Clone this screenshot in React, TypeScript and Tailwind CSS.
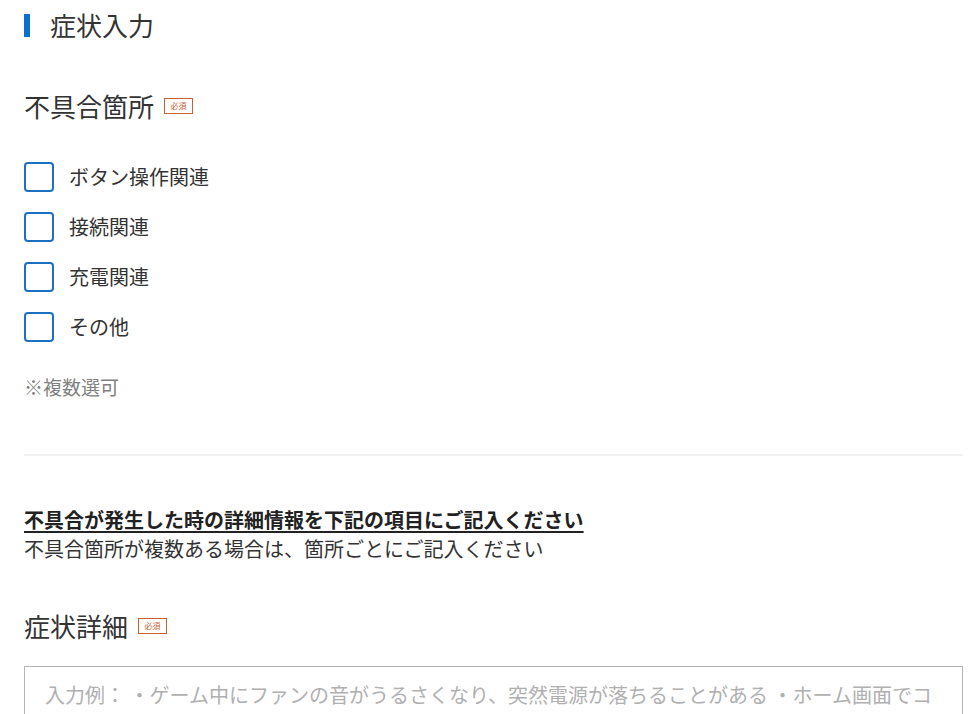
import React from "react";

const font = { fontFamily: '"Noto Sans CJK JP", "Noto Sans", sans-serif' };

function Badge() {
  return (
    <span className="ml-[10px] inline-flex h-[16px] w-[29px] items-center justify-center border border-[#c9602f] bg-white text-[8px] leading-none text-[#c9602f]">
      必須
    </span>
  );
}

function CheckRow({ label }: { label: string }) {
  return (
    <label className="flex h-[30px] items-center">
      <span className="h-[30px] w-[30px] shrink-0 rounded-[4px] border-2 border-[#1b6fc4] bg-white" />
      <span className="ml-[15px] text-[20px] leading-[30px] text-[#333]">{label}</span>
    </label>
  );
}

export default function App() {
  return (
    <div className="min-h-[714px] bg-white pl-[24px] pr-[5px] text-[#333]" style={font}>
      <div className="flex h-[36px] items-center pt-0 mt-[7px]">
        <span className="h-[23px] w-[6px] bg-[#0b6fd0]" />
        <h2 className="ml-[20px] text-[26px] font-normal leading-[36px] text-[#333]">症状入力</h2>
      </div>

      <div className="mt-[45px] flex h-[36px] items-center">
        <h3 className="text-[26px] font-normal leading-[36px] text-[#333]">不具合箇所</h3>
        <Badge />
      </div>

      <div className="mt-[38px] flex flex-col gap-[20px]">
        <CheckRow label="ボタン操作関連" />
        <CheckRow label="接続関連" />
        <CheckRow label="充電関連" />
        <CheckRow label="その他" />
      </div>

      <p className="mt-[30px] text-[19px] leading-[30px] text-[#808080]">※複数選可</p>

      <div className="mt-[52px] h-[2px] bg-[#f3f3f3]" />

      <p className="mt-[49px] text-[20px] font-bold leading-[29px] text-[#222] underline underline-offset-[3px]">
        不具合が発生した時の詳細情報を下記の項目にご記入ください
      </p>
      <p className="text-[20px] leading-[29px] text-[#333]">
        不具合箇所が複数ある場合は、箇所ごとにご記入ください
      </p>

      <div className="mt-[45px] flex h-[36px] items-center">
        <h3 className="text-[26px] font-normal leading-[36px] text-[#333]">症状詳細</h3>
        <Badge />
      </div>

      <textarea
        className="mt-[22px] block h-[150px] w-[939px] resize-none border border-[#b4b4b4] bg-white px-[20px] pt-[13px] text-[20px] leading-[30px] text-[#333] placeholder:text-[#b0b0b0] outline-none"
        style={font}
        placeholder="入力例： ・ゲーム中にファンの音がうるさくなり、突然電源が落ちることがある ・ホーム画面でコントローラーが反応しなくなる"
      />
    </div>
  );
}
